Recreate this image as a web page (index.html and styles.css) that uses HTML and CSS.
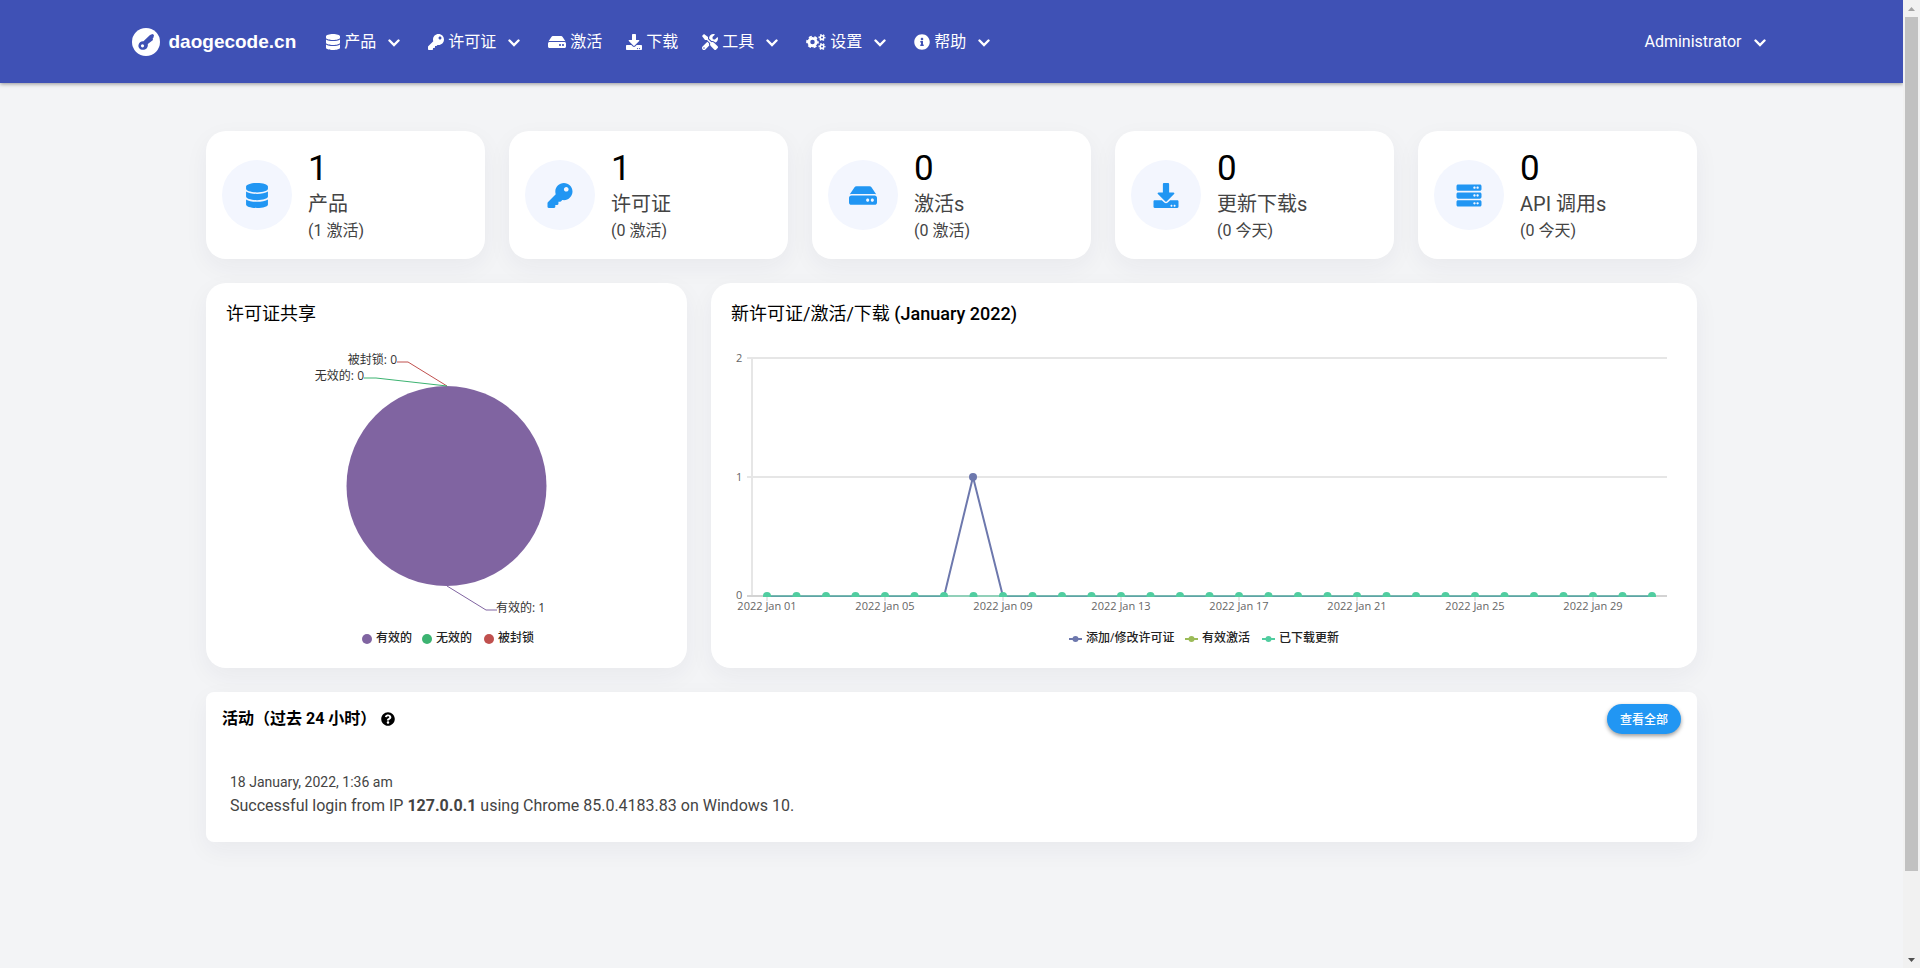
FILE: index.html
```html
<!DOCTYPE html>
<html lang="zh-CN">
<head>
<meta charset="utf-8">
<title>daogecode.cn</title>
<link rel="stylesheet" href="styles.css">
</head>
<body>
<svg class="sprite" aria-hidden="true">
  <symbol id="i-database" viewBox="0 0 448 512"><path d="M448 73.143v45.714C448 159.143 347.667 192 224 192S0 159.143 0 118.857V73.143C0 32.857 100.333 0 224 0s224 32.857 224 73.143zM448 176v102.857C448 319.143 347.667 352 224 352S0 319.143 0 278.857V176c48.125 33.143 136.208 48.572 224 48.572S399.874 209.143 448 176zm0 160v102.857C448 479.143 347.667 512 224 512S0 479.143 0 438.857V336c48.125 33.143 136.208 48.572 224 48.572S399.874 369.143 448 336z"/></symbol>
  <symbol id="i-key" viewBox="0 0 512 512"><path d="M512 176.001C512 273.203 433.202 352 336 352c-11.22 0-22.19-1.062-32.827-3.069l-24.012 27.014A23.999 23.999 0 0 1 261.223 384H224v40c0 13.255-10.745 24-24 24h-40v40c0 13.255-10.745 24-24 24H24c-13.255 0-24-10.745-24-24v-78.059c0-6.365 2.529-12.47 7.029-16.971l161.802-161.802C163.108 213.814 160 195.271 160 176 160 78.798 238.797.001 335.999 0 433.488-.001 512 78.511 512 176.001zM336 128c0 26.51 21.49 48 48 48s48-21.49 48-48-21.49-48-48-48-48 21.49-48 48z"/></symbol>
  <symbol id="i-hdd" viewBox="0 0 576 512"><path d="M576 304v96c0 26.51-21.49 48-48 48H48c-26.51 0-48-21.49-48-48v-96c0-26.51 21.49-48 48-48h480c26.51 0 48 21.49 48 48zm-48-80a79.557 79.557 0 0 1 30.777 6.165L462.25 85.374A48.003 48.003 0 0 0 422.311 64H153.689a48 48 0 0 0-39.938 21.374L17.223 230.165A79.557 79.557 0 0 1 48 224h480zm-48 96c-17.673 0-32 14.327-32 32s14.327 32 32 32 32-14.327 32-32-14.327-32-32-32zm-96 0c-17.673 0-32 14.327-32 32s14.327 32 32 32 32-14.327 32-32-14.327-32-32-32z"/></symbol>
  <symbol id="i-download" viewBox="0 0 512 512"><path d="M216 0h80c13.3 0 24 10.7 24 24v168h87.7c17.8 0 26.7 21.5 14.1 34.1L269.7 378.3c-7.5 7.5-19.8 7.5-27.3 0L90.1 226.1c-12.6-12.6-3.7-34.1 14.1-34.1H192V24c0-13.3 10.7-24 24-24zm296 376v112c0 13.3-10.7 24-24 24H24c-13.3 0-24-10.7-24-24V376c0-13.3 10.7-24 24-24h146.7l49 49c20.1 20.1 52.5 20.1 72.6 0l49-49H488c13.3 0 24 10.7 24 24zm-124 88c0-11-9-20-20-20s-20 9-20 20 9 20 20 20 20-9 20-20zm64 0c0-11-9-20-20-20s-20 9-20 20 9 20 20 20 20-9 20-20z"/></symbol>
  <symbol id="i-tools" viewBox="0 0 512 512"><path d="M501.1 395.7L384 278.6c-23.1-23.1-57.6-27.6-85.4-13.9L192 158.1V96L64 0 0 64l96 128h62.1l106.6 106.6c-13.6 27.8-9.2 62.3 13.9 85.4l117.1 117.1c14.6 14.6 38.2 14.6 52.7 0l52.7-52.7c14.5-14.6 14.5-38.2 0-52.7zM331.7 225c28.3 0 54.9 11 74.9 31l19.4 19.4c15.8-6.9 30.8-16.5 43.8-29.5 37.1-37.1 49.7-89.3 37.9-136.7-2.2-9-13.5-12.1-20.1-5.5l-74.4 74.4-67.9-11.3L334 98.9l74.4-74.4c6.6-6.6 3.4-17.9-5.7-20.2-47.4-11.7-99.6.9-136.6 37.9-28.5 28.5-41.9 66.1-41.2 103.6l82.1 82.1c8.1-1.9 16.5-2.9 24.7-2.9zm-103.9 82l-56.7-56.7L18.7 402.8c-25 25-25 65.5 0 90.5s65.5 25 90.5 0l123.6-123.6c-7.6-19.9-9.9-41.6-5-62.7zM64 472c-13.2 0-24-10.8-24-24 0-13.3 10.7-24 24-24s24 10.7 24 24c0 13.2-10.7 24-24 24z"/></symbol>
  <symbol id="i-cogs" viewBox="0 0 640 512">
    <g fill="none" stroke="currentColor">
      <circle cx="208" cy="256" r="118" stroke-width="92"/>
      <circle cx="208" cy="256" r="172" stroke-width="60" stroke-dasharray="96 84" stroke-dashoffset="48"/>
      <circle cx="512" cy="112" r="58" stroke-width="48"/>
      <circle cx="512" cy="112" r="90" stroke-width="44" stroke-dasharray="52 42" stroke-dashoffset="26"/>
      <circle cx="512" cy="400" r="58" stroke-width="48"/>
      <circle cx="512" cy="400" r="90" stroke-width="44" stroke-dasharray="52 42" stroke-dashoffset="26"/>
    </g>
  </symbol>
  <symbol id="i-info" viewBox="0 0 512 512"><path d="M256 8C119.043 8 8 119.083 8 256c0 136.997 111.043 248 248 248s248-111.003 248-248C504 119.083 392.957 8 256 8zm0 110c23.196 0 42 18.804 42 42s-18.804 42-42 42-42-18.804-42-42 18.804-42 42-42zm56 254c0 6.627-5.373 12-12 12h-88c-6.627 0-12-5.373-12-12v-24c0-6.627 5.373-12 12-12h12v-64h-12c-6.627 0-12-5.373-12-12v-24c0-6.627 5.373-12 12-12h64c6.627 0 12 5.373 12 12v100h12c6.627 0 12 5.373 12 12v24z"/></symbol>
  <symbol id="i-question" viewBox="0 0 512 512"><path d="M504 256c0 136.997-111.043 248-248 248S8 392.997 8 256C8 119.083 119.043 8 256 8s248 111.083 248 248zM262.655 90c-54.497 0-89.255 22.957-116.549 63.758-3.536 5.286-2.353 12.415 2.715 16.258l34.699 26.31c5.205 3.947 12.621 3.008 16.665-2.122 17.864-22.658 30.113-35.797 57.303-35.797 20.429 0 45.698 13.148 45.698 32.958 0 14.976-12.363 22.667-32.534 33.976C247.128 238.528 216 254.941 216 296v4c0 6.627 5.373 12 12 12h56c6.627 0 12-5.373 12-12v-1.333c0-28.462 83.186-29.647 83.186-106.667 0-58.002-60.165-102-116.531-102zM256 338c-25.365 0-46 20.635-46 46 0 25.364 20.635 46 46 46s46-20.636 46-46c0-25.365-20.635-46-46-46z"/></symbol>
  <symbol id="i-server" viewBox="0 0 512 512">
    <path id="unit" d="M480 160H32c-17.673 0-32-14.327-32-32V64c0-17.673 14.327-32 32-32h448c17.673 0 32 14.327 32 32v64c0 17.673-14.327 32-32 32zm-48-88c-13.255 0-24 10.745-24 24s10.745 24 24 24 24-10.745 24-24-10.745-24-24-24zm-64 0c-13.255 0-24 10.745-24 24s10.745 24 24 24 24-10.745 24-24-10.745-24-24-24z"/>
    <use href="#unit" y="160"/><use href="#unit" y="320"/>
  </symbol>
  <symbol id="i-chevron" viewBox="0 0 12 8"><path d="M1.500 1.500 6 6l4.500-4.500" fill="none" stroke="currentColor" stroke-width="2.400" stroke-linecap="round"/></symbol>
</svg>

<div class="page">
  <header class="topbar">
    <nav class="topbar-inner">
      <a class="brand" href="#">
        <svg class="logo" viewBox="0 0 28 28"><circle cx="14" cy="14" r="14" fill="#fff"/><path d="M20.500 6l1.500 1-.5 2.500-.8 1 .3 1.500-5.200 4c.5 4-2 5.800-4.800 5.800-3.200 0-5-2.300-4.500-4.800s2.300-4 5-3.800l1.500-1.500L18 7z" fill="#3f51b5"/><circle cx="10.500" cy="17.800" r="1.600" fill="#fff"/></svg>
        <span>daogecode.cn</span>
      </a>
      <div class="menu">
        <button class="item" type="button"><svg class="icon w14"><use href="#i-database"/></svg>产品<svg class="chevron"><use href="#i-chevron"/></svg></button>
        <button class="item" type="button"><svg class="icon"><use href="#i-key"/></svg>许可证<svg class="chevron"><use href="#i-chevron"/></svg></button>
        <a class="item" href="#"><svg class="icon w18"><use href="#i-hdd"/></svg>激活</a>
        <a class="item" href="#"><svg class="icon"><use href="#i-download"/></svg>下载</a>
        <button class="item" type="button"><svg class="icon"><use href="#i-tools"/></svg>工具<svg class="chevron"><use href="#i-chevron"/></svg></button>
        <button class="item" type="button"><svg class="icon w20"><use href="#i-cogs"/></svg>设置<svg class="chevron"><use href="#i-chevron"/></svg></button>
        <button class="item" type="button"><svg class="icon"><use href="#i-info"/></svg>帮助<svg class="chevron"><use href="#i-chevron"/></svg></button>
      </div>
      <button class="item account" type="button">Administrator<svg class="chevron"><use href="#i-chevron"/></svg></button>
    </nav>
  </header>

  <main class="content">
    <section class="stats">
      <article class="card stat"><span class="badge"><svg><use href="#i-database"/></svg></span><div><div class="num">1</div><div class="label">产品</div><div class="sub">(1 激活)</div></div></article>
      <article class="card stat"><span class="badge"><svg><use href="#i-key"/></svg></span><div><div class="num">1</div><div class="label">许可证</div><div class="sub">(0 激活)</div></div></article>
      <article class="card stat"><span class="badge"><svg><use href="#i-hdd"/></svg></span><div><div class="num">0</div><div class="label">激活s</div><div class="sub">(0 激活)</div></div></article>
      <article class="card stat"><span class="badge"><svg><use href="#i-download"/></svg></span><div><div class="num">0</div><div class="label">更新下载s</div><div class="sub">(0 今天)</div></div></article>
      <article class="card stat"><span class="badge"><svg><use href="#i-server"/></svg></span><div><div class="num">0</div><div class="label">API 调用s</div><div class="sub">(0 今天)</div></div></article>
    </section>

    <section class="charts">
      <article class="card chart">
        <h2>许可证共享</h2>
        <svg class="plot" viewBox="0 0 441 320">
          <circle cx="220.500" cy="158" r="100" fill="#8064a1"/>
          <g fill="none">
            <path d="M171 34h11l39 24" stroke="#c0504e"/>
            <path d="M138 50h12l71 8" stroke="#3cb371"/>
            <path d="M221 258l39 24h11" stroke="#8064a1"/>
          </g>
          <g class="slice-label">
            <text x="171" y="36" text-anchor="end">被封锁: 0</text>
            <text x="138" y="52" text-anchor="end">无效的: 0</text>
            <text x="270" y="284">有效的: 1</text>
          </g>
          <circle cx="141" cy="311" r="5" fill="#8064a1"/>
          <circle cx="201" cy="311" r="5" fill="#3cb371"/>
          <circle cx="263" cy="311" r="5" fill="#c0504e"/>
          <g class="legend">
            <text x="150" y="314">有效的</text>
            <text x="210" y="314">无效的</text>
            <text x="272" y="314">被封锁</text>
          </g>
        </svg>
      </article>
      <article class="card chart">
        <h2>新许可证/激活/下载 <span class="period">(January 2022)</span></h2>
        <svg class="plot" id="line-plot" viewBox="0 0 946 320">
          <clipPath id="area"><rect x="16" y="20" width="920" height="249"/></clipPath>
          <g stroke="#e6e6e6" stroke-width="2">
            <path d="M16 30h920M16 149h920M21 30v238"/>
            <path d="M16 268h920" stroke="#d3d3d3"/>
          </g>
          <g id="ticks"></g>
          <g clip-path="url(#area)">
            <path d="M36 268.500h177L242 149l30 119.500h649" fill="none" stroke="#6d78ad" stroke-width="2"/>
            <path d="M36 268h885" stroke="#51cda0" stroke-width="1"/>
            <circle cx="242" cy="149" r="4" fill="#6d78ad"/>
            <g id="dots" fill="#51cda0"></g>
          </g>
          <g class="axis">
            <text x="5" y="34">2</text><text x="5" y="153">1</text><text x="5" y="271">0</text>
          </g>
          <g class="axis" id="dates" text-anchor="middle"></g>
          <g stroke-width="2">
            <path d="M338 311h13" stroke="#6d78ad"/><circle cx="344.500" cy="311" r="3" fill="#6d78ad"/>
            <path d="M454 311h13" stroke="#9bbb58"/><circle cx="460.500" cy="311" r="3" fill="#9bbb58"/>
            <path d="M531 311h13" stroke="#51cda0"/><circle cx="537.500" cy="311" r="3" fill="#51cda0"/>
          </g>
          <g class="legend">
            <text x="355" y="314">添加/修改许可证</text>
            <text x="471" y="314">有效激活</text>
            <text x="548" y="314">已下载更新</text>
          </g>
        </svg>
      </article>
    </section>

    <section class="card activity">
      <header class="activity-head">
        <h3>活动（过去 24 小时）<svg><use href="#i-question"/></svg></h3>
        <button class="view-all" type="button">查看全部</button>
      </header>
      <div class="entry">
        <time>18 January, 2022, 1:36 am</time>
        <p>Successful login from IP <b>127.0.0.1</b> using Chrome 85.0.4183.83 on Windows 10.</p>
      </div>
    </section>
  </main>
</div>

<div class="scrollbar" aria-hidden="true">
  <svg class="arrow" viewBox="0 0 17 17"><path d="M8.500 7l3.500 4H5z" fill="#a3a3a3"/></svg>
  <div class="thumb"></div><div class="rest"></div>
  <svg class="arrow" viewBox="0 0 17 17"><path d="M8.500 11L12 7H5z" fill="#505050"/></svg>
</div>
<script src="chart.js"></script>
</body>
</html>
```
FILE: styles.css
```css
* { box-sizing: border-box; }
body {
  margin: 0;
  display: flex;
  height: 100vh;
  overflow: hidden;
  background: #f3f4f6;
  color: #000;
  font-family: Roboto, "Noto Sans CJK SC", sans-serif;
  font-size: 16px;
}
h2, h3, p { margin: 0; }
button { font: inherit; border: 0; background: none; cursor: pointer; }
.sprite { position: absolute; width: 0; height: 0; }
.page { flex: 1; min-width: 0; }

.topbar {
  background: #3f51b5;
  color: #fff;
  box-shadow: 0 1px 4px rgba(0, 0, 0, .4);
}
.topbar-inner {
  max-width: 1640px;
  height: 83px;
  margin: 0 auto;
  display: flex;
  align-items: center;
}
.brand {
  display: flex;
  align-items: center;
  gap: 9px;
  margin-right: 17px;
  color: #fff;
  text-decoration: none;
  font: bold 19px "Liberation Sans", sans-serif;
}
.logo { width: 28px; height: 28px; }
.menu { display: flex; }
.item {
  display: flex;
  align-items: center;
  padding: 0 12px;
  color: #fff;
  text-decoration: none;
  line-height: 24px;
  white-space: nowrap;
}
.icon { width: 16px; height: 16px; margin-right: 4px; fill: currentColor; }
.w14 { width: 16px; margin-right: 3px; }
.w18 { width: 18px; }
.w20 { width: 20px; }
.chevron { width: 12px; height: 8px; margin: 2px 4px 0 12px; }
.account { margin-left: auto; padding-right: 2px; }

.content {
  max-width: 1539px;
  margin: 0 auto;
  padding: 48px 24px;
  display: flex;
  flex-direction: column;
  gap: 24px;
}
.card {
  background: #fff;
  border-radius: 20px;
  box-shadow: 0 8px 24px rgba(30, 40, 70, .05);
}
.stats { display: grid; grid-template-columns: repeat(5, 1fr); gap: 24px; }
.stat {
  display: flex;
  align-items: center;
  gap: 16px;
  padding: 16px;
  color: #444;
}
.badge {
  display: flex;
  align-items: center;
  justify-content: center;
  width: 70px;
  height: 70px;
  border-radius: 50%;
  background: #f3f6fe;
}
.badge svg { width: 28px; height: 25px; fill: #2196f3; }
.num { color: #000; font-size: 35px; line-height: 44px; }
.label { font-size: 20px; line-height: 27px; }
.sub { font-size: 16px; line-height: 25px; }

.charts { display: grid; grid-template-columns: 481fr 986fr; gap: 24px; }
.chart { padding: 16px 20px 20px; min-width: 0; }
.chart h2 { font-size: 18px; font-weight: 400; line-height: 29px; }
.period { font-weight: 500; }
.plot { display: block; width: 100%; }
.slice-label { font: 12px "Open Sans", "Noto Sans CJK SC", sans-serif; fill: #333; }
.axis { font: 11px "Open Sans", sans-serif; fill: #666; }
.legend { font: 500 12px "Open Sans", "Noto Sans CJK SC", sans-serif; fill: #222; }

.activity { border-radius: 8px; padding: 12px 16px 24px; }
.activity-head { display: flex; align-items: center; justify-content: space-between; }
.activity h3 { display: flex; align-items: center; gap: 5px; font-size: 16px; font-weight: 700; line-height: 24px; }
.activity h3 svg { width: 14px; height: 14px; }
.view-all {
  width: 74px;
  height: 30px;
  padding: 0 0 2px;
  border-radius: 15px;
  background: #2196f3;
  color: #fff;
  font-size: 12px;
  font-weight: 500;
  box-shadow: 0 2px 4px rgba(0, 0, 0, .4);
}
.entry { padding: 36px 8px 0; color: #444; line-height: 24px; }
.entry time { display: block; font-size: 14px; }

.scrollbar { width: 17px; display: flex; flex-direction: column; background: #f1f1f1; }
.arrow { width: 17px; height: 17px; }
.thumb { flex: 854; margin: 0 2px; background: #c1c1c1; }
.rest { flex: 80; }
```
FILE: chart.js
```js
const NS = 'http://www.w3.org/2000/svg';
function add(parent, name, attrs, text) {
  const el = document.createElementNS(NS, name);
  for (const key in attrs) el.setAttribute(key, attrs[key]);
  if (text) el.textContent = text;
  document.getElementById(parent).appendChild(el);
}
for (let day = 1; day <= 31; day++) {
  const x = 36 + (day - 1) * 29.5;
  add('dots', 'circle', { cx: x, cy: 268, r: 4 });
  if (day % 4 === 1) {
    add('ticks', 'path', { d: `M${x} 268v5`, stroke: '#e6e6e6', 'stroke-width': 2 });
    add('dates', 'text', { x: x, y: 282 }, '2022 Jan ' + String(day).padStart(2, '0'));
  }
}
```
